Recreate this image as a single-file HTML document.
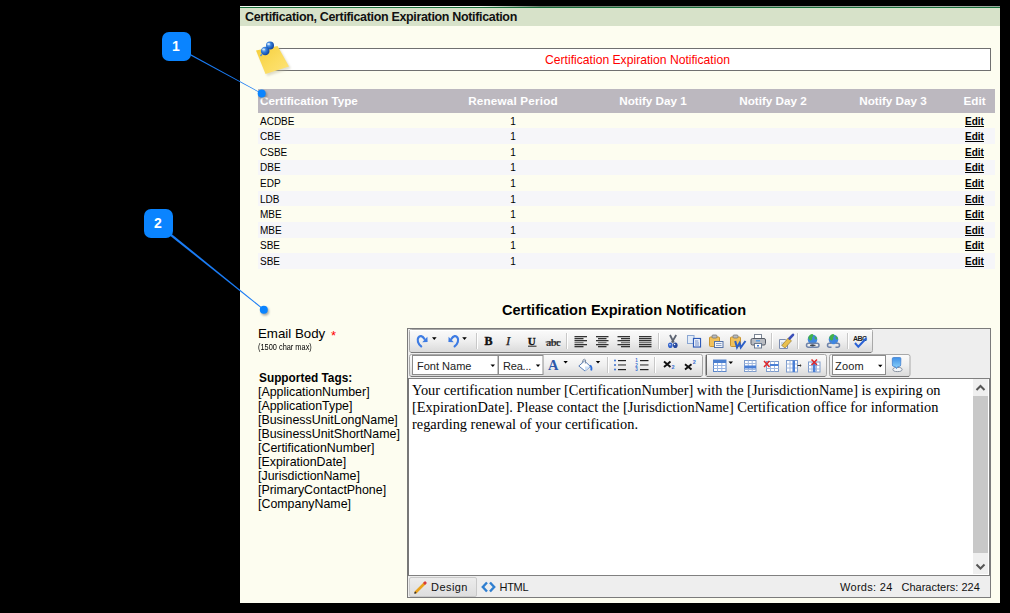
<!DOCTYPE html>
<html><head><meta charset="utf-8">
<style>
html,body{margin:0;padding:0;}
body{width:1010px;height:613px;background:#000;position:relative;overflow:hidden;font-family:"Liberation Sans",sans-serif;}
.a{position:absolute;}
#panel{left:240px;top:6px;width:760px;height:597px;background:#fdfdf0;}
#topline{left:240px;top:6px;width:760px;height:1px;background:linear-gradient(90deg,#f4f8f0 0,#f4f8f0 240px,#6a7a6a 300px,#8a9a8a 500px,#b0b8b0 700px,#9aa49a 760px);}
#greenline{left:240px;top:7px;width:760px;height:1px;background:#17703c;}
#hdr{left:240px;top:8px;width:760px;height:18px;background:#d7e2c9;}
#hdrtxt{left:245px;top:9.5px;font-size:12.5px;font-weight:bold;color:#111;white-space:nowrap;line-height:15px;letter-spacing:-0.34px;}
#tbox{left:272px;top:48px;width:717px;height:21px;border:1px solid #707070;background:#fff;}
#ttxt{left:284px;top:52.5px;width:707px;text-align:center;font-size:12.15px;color:#f00;line-height:15px;}
#thead{left:258px;top:89px;width:737px;height:24px;background:#bcb8bf;}
.th{position:absolute;top:94px;font-size:11.7px;font-weight:bold;color:#fff;white-space:nowrap;line-height:14px;}
.row{position:absolute;left:258px;width:737px;}
.stripe{background:#f6f6f9;}
.td{position:absolute;font-size:10px;color:#000;white-space:nowrap;line-height:12px;}
.edit{position:absolute;font-size:10px;font-weight:bold;color:#000;text-decoration:underline;white-space:nowrap;line-height:12px;}
</style></head><body>
<div class="a" id="panel"></div>
<div class="a" id="topline"></div>
<div class="a" id="greenline"></div>
<div class="a" id="hdr"></div>
<div class="a" id="hdrtxt">Certification, Certification Expiration Notification</div>

<div class="a" id="tbox"></div>
<div class="a" id="ttxt">Certification Expiration Notification</div>

<div class="a" id="thead"></div>
<div class="th" style="left:260px">Certification Type</div>
<div class="th" style="left:413px;width:200px;text-align:center;letter-spacing:0.18px">Renewal Period</div>
<div class="th" style="left:553px;width:200px;text-align:center">Notify Day 1</div>
<div class="th" style="left:673px;width:200px;text-align:center">Notify Day 2</div>
<div class="th" style="left:793px;width:200px;text-align:center">Notify Day 3</div>
<div class="th" style="left:944.5px;width:60px;text-align:center">Edit</div>

<div class="row" style="top:113px;height:15px"></div>
<div class="row stripe" style="top:128px;height:16px"></div>
<div class="row" style="top:144px;height:16px"></div>
<div class="row stripe" style="top:160px;height:15px"></div>
<div class="row" style="top:175px;height:16px"></div>
<div class="row stripe" style="top:191px;height:15px"></div>
<div class="row" style="top:206px;height:16px"></div>
<div class="row stripe" style="top:222px;height:16px"></div>
<div class="row" style="top:238px;height:15px"></div>
<div class="row stripe" style="top:253px;height:16px"></div>
<div class="td" style="left:260px;top:115.5px">ACDBE</div><div class="td" style="left:483px;width:60px;text-align:center;top:115.5px">1</div><div class="edit" style="left:944.5px;width:60px;text-align:center;top:115.5px">Edit</div>
<div class="td" style="left:260px;top:131.1px">CBE</div><div class="td" style="left:483px;width:60px;text-align:center;top:131.1px">1</div><div class="edit" style="left:944.5px;width:60px;text-align:center;top:131.1px">Edit</div>
<div class="td" style="left:260px;top:146.7px">CSBE</div><div class="td" style="left:483px;width:60px;text-align:center;top:146.7px">1</div><div class="edit" style="left:944.5px;width:60px;text-align:center;top:146.7px">Edit</div>
<div class="td" style="left:260px;top:162.3px">DBE</div><div class="td" style="left:483px;width:60px;text-align:center;top:162.3px">1</div><div class="edit" style="left:944.5px;width:60px;text-align:center;top:162.3px">Edit</div>
<div class="td" style="left:260px;top:177.9px">EDP</div><div class="td" style="left:483px;width:60px;text-align:center;top:177.9px">1</div><div class="edit" style="left:944.5px;width:60px;text-align:center;top:177.9px">Edit</div>
<div class="td" style="left:260px;top:193.5px">LDB</div><div class="td" style="left:483px;width:60px;text-align:center;top:193.5px">1</div><div class="edit" style="left:944.5px;width:60px;text-align:center;top:193.5px">Edit</div>
<div class="td" style="left:260px;top:209.1px">MBE</div><div class="td" style="left:483px;width:60px;text-align:center;top:209.1px">1</div><div class="edit" style="left:944.5px;width:60px;text-align:center;top:209.1px">Edit</div>
<div class="td" style="left:260px;top:224.7px">MBE</div><div class="td" style="left:483px;width:60px;text-align:center;top:224.7px">1</div><div class="edit" style="left:944.5px;width:60px;text-align:center;top:224.7px">Edit</div>
<div class="td" style="left:260px;top:240.3px">SBE</div><div class="td" style="left:483px;width:60px;text-align:center;top:240.3px">1</div><div class="edit" style="left:944.5px;width:60px;text-align:center;top:240.3px">Edit</div>
<div class="td" style="left:260px;top:255.9px">SBE</div><div class="td" style="left:483px;width:60px;text-align:center;top:255.9px">1</div><div class="edit" style="left:944.5px;width:60px;text-align:center;top:255.9px">Edit</div>


<!-- note icon -->
<svg class="a" style="left:250px;top:36px" width="44" height="44" viewBox="0 0 44 44">
<defs>
<linearGradient id="ng" x1="0" y1="0" x2="1" y2="1"><stop offset="0" stop-color="#f5cd3a"/><stop offset="0.55" stop-color="#fbdc5e"/><stop offset="1" stop-color="#fde37a"/></linearGradient>
<radialGradient id="pg" cx="0.35" cy="0.35" r="0.7"><stop offset="0" stop-color="#9cc8f5"/><stop offset="0.45" stop-color="#2f78d6"/><stop offset="1" stop-color="#0d3f9a"/></radialGradient>
<filter id="nsh" x="-20%" y="-20%" width="140%" height="140%"><feGaussianBlur stdDeviation="0.8"/></filter>
</defs>
<polygon points="7,15.5 28.5,11 40,31.5 16.5,39" fill="#b8b49a" opacity="0.45" filter="url(#nsh)" transform="translate(0.8,1)"/>
<polygon points="6,14.5 27.5,10 39,30.5 15.5,38" fill="url(#ng)"/>
<circle cx="20" cy="9.6" r="4" fill="url(#pg)"/>
<circle cx="15.2" cy="15" r="4.3" fill="url(#pg)"/>
<ellipse cx="18.6" cy="8" rx="1.4" ry="0.9" fill="#d8ecff" opacity="0.9"/>
<ellipse cx="13.6" cy="13.4" rx="1.4" ry="0.9" fill="#d8ecff" opacity="0.8"/>
<line x1="12" y1="18" x2="10.5" y2="20" stroke="#5b8fd0" stroke-width="1.4"/>
</svg>

<!-- callouts -->
<svg class="a" style="left:0;top:0" width="1010" height="613">
<defs><filter id="dsh" x="-100%" y="-100%" width="300%" height="300%"><feGaussianBlur stdDeviation="1"/></filter></defs>
<polygon points="189.5,53.4 190.5,55.6 261.9,94 261.5,93" fill="#1a7cf5"/>
<polygon points="171.6,234 170.4,235.9 263.5,310.1 264.1,309.3" fill="#1a7cf5"/>
<circle cx="263" cy="95" r="4" fill="#555" opacity="0.5" filter="url(#dsh)"/>
<circle cx="261.7" cy="93.5" r="4" fill="#0a84ff"/>
<circle cx="265" cy="311.5" r="4" fill="#555" opacity="0.5" filter="url(#dsh)"/>
<circle cx="263.8" cy="309.7" r="4" fill="#0a84ff"/>
<rect x="162" y="32" width="29" height="29" rx="7" fill="#0a84ff"/>
<rect x="144" y="209" width="29" height="29" rx="7" fill="#0a84ff"/>
<text x="175.8" y="51" font-family="Liberation Sans" font-weight="bold" font-size="14" fill="#fff" text-anchor="middle">1</text>
<text x="157.8" y="228" font-family="Liberation Sans" font-weight="bold" font-size="14" fill="#fff" text-anchor="middle">2</text>
</svg>

<div class="a" style="left:502px;top:302px;font-size:14.55px;font-weight:bold;color:#000;white-space:nowrap;line-height:17px">Certification Expiration Notification</div>

<div class="a" style="left:258px;top:326px;font-size:13.3px;color:#000;white-space:nowrap;line-height:15px">Email Body <span style="color:#f00;font-size:13px;margin-left:2px;position:relative;top:2px">*</span></div>
<div class="a" style="left:258px;top:341px;font-size:9.6px;color:#000;white-space:nowrap;line-height:11px;transform:scaleX(0.77);transform-origin:0 0">(1500 char max)</div>
<div class="a" style="left:259px;top:371px;font-size:11.85px;font-weight:bold;color:#000;white-space:nowrap;line-height:14px">Supported Tags:</div>
<div class="a" style="left:258px;top:386.3px;font-size:12.4px;color:#000;white-space:nowrap;line-height:13.95px">[ApplicationNumber]<br>[ApplicationType]<br>[BusinessUnitLongName]<br>[BusinessUnitShortName]<br>[CertificationNumber]<br>[ExpirationDate]<br>[JurisdictionName]<br>[PrimaryContactPhone]<br>[CompanyName]</div>

<!-- editor -->
<div class="a" style="left:407px;top:328px;width:582px;height:268px;border:1px solid #7b7b7b;background:#eeeeee"></div>
<div class="a" style="left:407px;top:378px;width:2px;height:198px;background:#777"></div>
<div class="a" style="left:409px;top:378px;width:580px;height:197px;background:#fff;border-top:1px solid #808080;border-bottom:1px solid #808080;border-right:1px solid #808080;box-sizing:border-box;width:581px;height:198px;top:378px"></div>
<div class="a" style="left:412px;top:382px;width:560px;font-family:'Liberation Serif',serif;font-size:14.37px;line-height:16.9px;color:#000">Your certification number [CertificationNumber] with the [JurisdictionName] is expiring on [ExpirationDate]. Please contact the [JurisdictionName] Certification office for information regarding renewal of your certification.</div>
<!-- toolbar -->
<svg class="a" style="left:0;top:0" width="1010" height="613">
<defs>
<linearGradient id="tg" x1="0" y1="0" x2="0" y2="1"><stop offset="0" stop-color="#fbfbfb"/><stop offset="0.5" stop-color="#efefef"/><stop offset="1" stop-color="#d9d9d9"/></linearGradient>
<linearGradient id="blu" x1="0" y1="0" x2="0" y2="1"><stop offset="0" stop-color="#6aa6f0"/><stop offset="1" stop-color="#2a62c8"/></linearGradient>
<linearGradient id="tbl" x1="0" y1="0" x2="0" y2="1"><stop offset="0" stop-color="#5d8fd6"/><stop offset="1" stop-color="#3a6bbf"/></linearGradient>
</defs>
<!-- group backgrounds -->
<rect x="409.5" y="329.5" width="463" height="23" rx="2" fill="url(#tg)" stroke="#a8a8a8"/><line x1="411" y1="352.5" x2="871" y2="352.5" stroke="#7a7a7a"/>
<rect x="409.5" y="354.5" width="293" height="22" rx="2" fill="url(#tg)" stroke="#a8a8a8"/><line x1="411" y1="376.5" x2="701" y2="376.5" stroke="#7a7a7a"/>
<rect x="705.5" y="354.5" width="121" height="22" rx="2" fill="url(#tg)" stroke="#a8a8a8"/><line x1="707" y1="376.5" x2="825" y2="376.5" stroke="#7a7a7a"/>
<rect x="829.5" y="354.5" width="80.5" height="22" rx="2" fill="url(#tg)" stroke="#a8a8a8"/><line x1="831" y1="376.5" x2="909" y2="376.5" stroke="#7a7a7a"/>
<line x1="410" y1="330.5" x2="872" y2="330.5" stroke="#fff" stroke-width="1"/>
<!-- separators -->
<g stroke="#c8c8c8" stroke-width="1">
<line x1="476.5" y1="333" x2="476.5" y2="349"/><line x1="566.5" y1="333" x2="566.5" y2="349"/><line x1="658.5" y1="333" x2="658.5" y2="349"/>
<line x1="771.5" y1="333" x2="771.5" y2="349"/><line x1="797.5" y1="333" x2="797.5" y2="349"/><line x1="847.5" y1="333" x2="847.5" y2="349"/>
<line x1="607.5" y1="357" x2="607.5" y2="373"/><line x1="654.5" y1="357" x2="654.5" y2="373"/>
</g>
<g stroke="#fff" stroke-width="1">
<line x1="477.5" y1="333" x2="477.5" y2="349"/><line x1="567.5" y1="333" x2="567.5" y2="349"/><line x1="659.5" y1="333" x2="659.5" y2="349"/>
<line x1="772.5" y1="333" x2="772.5" y2="349"/><line x1="798.5" y1="333" x2="798.5" y2="349"/><line x1="848.5" y1="333" x2="848.5" y2="349"/>
<line x1="608.5" y1="357" x2="608.5" y2="373"/><line x1="655.5" y1="357" x2="655.5" y2="373"/>
</g>
<line x1="706.5" y1="355" x2="706.5" y2="375" stroke="#666" stroke-width="1"/>

<!-- redo -->
<path d="M421.2,346.4 C418,344 416.8,340 418.3,337.6 C419.8,335.3 422.5,335.5 424.3,338.8" fill="none" stroke="#3d7be3" stroke-width="2.2" stroke-linecap="round"/>
<polygon points="427.4,336.8 427.6,342 422.2,342.2" fill="#3d7be3"/>
<polygon points="432,337.2 436.6,337.2 434.3,340" fill="#000"/>
<!-- undo -->
<path d="M454.6,346.4 C457.8,344 459,340 457.5,337.6 C456,335.3 453.3,335.5 451.5,338.8" fill="none" stroke="#3d7be3" stroke-width="2.2" stroke-linecap="round"/>
<polygon points="448.6,336.8 448.4,342 453.8,342.2" fill="#3d7be3"/>
<polygon points="462.2,337.2 466.8,337.2 464.5,340" fill="#000"/>

<!-- B I U abc -->
<text x="484.6" y="345" font-family="Liberation Serif" font-weight="bold" font-size="12" fill="#111" stroke="#111" stroke-width="0.4">B</text>
<text x="506" y="345.2" font-family="Liberation Serif" font-style="italic" font-size="13" fill="#222" stroke="#222" stroke-width="0.25">I</text>
<text x="527.8" y="344.8" font-family="Liberation Serif" font-weight="bold" font-size="11" fill="#111" stroke="#111" stroke-width="0.3">U</text>
<line x1="528" y1="346.2" x2="536.5" y2="346.2" stroke="#222" stroke-width="1"/>
<text x="546" y="346" font-family="Liberation Serif" font-weight="bold" font-size="10.5" fill="#333" letter-spacing="-0.6">abc</text>
<line x1="545.5" y1="342" x2="561" y2="342" stroke="#333" stroke-width="0.8"/>

<!-- align icons -->
<g fill="#333">
<rect x="574.5" y="336" width="12.5" height="1.3"/><rect x="574.5" y="338" width="9" height="1.3"/><rect x="574.5" y="340" width="12.5" height="1.3"/><rect x="574.5" y="342" width="9" height="1.3" fill="#777"/><rect x="574.5" y="344" width="12.5" height="1.3"/><rect x="574.5" y="346" width="9" height="1.3"/>
<rect x="596" y="336" width="12.5" height="1.3"/><rect x="598" y="338" width="8.5" height="1.3"/><rect x="596" y="340" width="12.5" height="1.3"/><rect x="598" y="342" width="8.5" height="1.3" fill="#777"/><rect x="596" y="344" width="12.5" height="1.3"/><rect x="598" y="346" width="8.5" height="1.3"/>
<rect x="617.5" y="336" width="12.5" height="1.3"/><rect x="621" y="338" width="9" height="1.3"/><rect x="617.5" y="340" width="12.5" height="1.3"/><rect x="621" y="342" width="9" height="1.3" fill="#777"/><rect x="617.5" y="344" width="12.5" height="1.3"/><rect x="621" y="346" width="9" height="1.3"/>
<rect x="639" y="336" width="12.5" height="1.3"/><rect x="639" y="338" width="12.5" height="1.3"/><rect x="639" y="340" width="12.5" height="1.3"/><rect x="639" y="342" width="12.5" height="1.3" fill="#777"/><rect x="639" y="344" width="12.5" height="1.3"/><rect x="639" y="346" width="12.5" height="1.3"/>
</g>

<!-- cut -->
<path d="M670,335 L673.8,342.5 M676.2,335 L671.8,342.5" stroke="#5d6472" stroke-width="1.8" fill="none"/>
<ellipse cx="670.3" cy="345.2" rx="2.3" ry="2.8" fill="#3565cc"/>
<ellipse cx="675.3" cy="345.2" rx="2.3" ry="2.8" fill="#27499e"/>
<circle cx="670" cy="344.8" r="0.7" fill="#fff"/><circle cx="674.6" cy="344.5" r="0.7" fill="#fff"/>
<!-- copy -->
<rect x="687.5" y="335.5" width="6.5" height="8" fill="#e3ecf8" stroke="#8aa6d2" stroke-width="1"/>
<rect x="693.5" y="338.5" width="7" height="8.5" fill="#fff" stroke="#2f5bb8" stroke-width="1.2"/>
<path d="M695,341 h3.5 M695,343 h4 M695,345 h4" stroke="#4f74c0" stroke-width="0.9"/>
<!-- paste -->
<rect x="709.5" y="337" width="10" height="9.5" rx="1" fill="#f1c15b" stroke="#c99531" stroke-width="1"/>
<rect x="712" y="335" width="5" height="3" rx="1" fill="#bbb" stroke="#777" stroke-width="0.8"/>
<rect x="714.5" y="341.5" width="8.5" height="6" fill="#f2f5fa" stroke="#5573a8" stroke-width="1"/>
<path d="M716,343.5 h5.5 M716,345.5 h5.5" stroke="#6d88b8" stroke-width="0.8"/>
<!-- paste word -->
<rect x="730.5" y="337" width="10" height="9.5" rx="1" fill="#f1c15b" stroke="#c99531" stroke-width="1"/>
<rect x="733" y="335" width="5" height="3" rx="1" fill="#bbb" stroke="#777" stroke-width="0.8"/>
<path d="M735.2,341 L737,347.5 L739.6,343 L740.8,347.5 L745.5,341" fill="none" stroke="#2c5fc7" stroke-width="2" stroke-linejoin="miter"/>
<!-- print -->
<rect x="754.5" y="334.5" width="7" height="4.5" fill="#fff" stroke="#7b8594" stroke-width="1"/>
<rect x="751" y="338.5" width="14.5" height="6.5" rx="1.5" fill="#b9bcc2" stroke="#555b66" stroke-width="1"/>
<rect x="756" y="340" width="4" height="1.5" fill="#5fa0e6"/>
<rect x="754.5" y="343.5" width="7" height="4.5" fill="#fff" stroke="#6a7a90" stroke-width="1"/>
<rect x="757" y="345" width="2" height="1.5" fill="#3a78d8"/>

<!-- clean (brush) -->
<path d="M779.5,339.5 h6 l2,2 v7 h-8 z" fill="#eef3fa" stroke="#7c8db0" stroke-width="1"/>
<path d="M781,343 h4 M781,345 h5" stroke="#9aa8c0" stroke-width="0.8"/>
<path d="M781.8,345.5 L788.2,338 L791.5,340.8 L785,348 Z" fill="#e9c04e" stroke="#9b7c2c" stroke-width="0.7"/>
<path d="M789.5,338.5 L793,334.8" stroke="#3b4fb8" stroke-width="2.6" stroke-linecap="round"/>
<!-- link -->
<circle cx="812.5" cy="339.5" r="4.8" fill="#3f86e0"/>
<path d="M808.2,338 q0.8,-3.6 4.3,-3.9 q1.5,1 0.6,2.4 q-1.6,0.6 -0.8,2.3 q-0.3,1.8 -2,1.6 q-1.5,-0.8 -2.1,-2.4z" fill="#43b049"/>
<path d="M814.5,336 q2.2,0.5 2.6,3 q-1.6,1 -2.4,-0.6z" fill="#43b049"/>
<rect x="806.5" y="343.3" width="7" height="4" rx="2" fill="#fff" fill-opacity="0.3" stroke="#6f83a8" stroke-width="1.5"/>
<rect x="812" y="343.3" width="7" height="4" rx="2" fill="#fff" fill-opacity="0.3" stroke="#6f83a8" stroke-width="1.5"/>
<line x1="810" y1="345.3" x2="815.5" y2="345.3" stroke="#333" stroke-width="1"/>
<!-- unlink -->
<circle cx="833.5" cy="339.5" r="4.8" fill="#3f86e0"/>
<path d="M829.2,338 q0.8,-3.6 4.3,-3.9 q1.5,1 0.6,2.4 q-1.6,0.6 -0.8,2.3 q-0.3,1.8 -2,1.6 q-1.5,-0.8 -2.1,-2.4z" fill="#43b049"/>
<path d="M835.5,336 q2.2,0.5 2.6,3 q-1.6,1 -2.4,-0.6z" fill="#43b049"/>
<path d="M831.5,343.3 h-2 a2,2 0 0 0 0,4 h2 M835.5,343.3 h2 a2,2 0 0 1 0,4 h-2" fill="none" stroke="#6f83a8" stroke-width="1.5"/>
<!-- spell -->
<text x="853" y="340.6" font-family="Liberation Sans" font-weight="bold" font-size="7" fill="#222" letter-spacing="-0.6">ABC</text>
<path d="M855,343 L858.3,346.8 L866.5,338" fill="none" stroke="#2a62d6" stroke-width="2"/>

<!-- row 2 -->
<rect x="412.5" y="355.5" width="85.5" height="19" fill="#fff" stroke="#8c8c8c"/>
<rect x="498.5" y="355.5" width="44.5" height="19" fill="#fff" stroke="#8c8c8c"/>
<rect x="832.5" y="355.5" width="53" height="19" fill="#fff" stroke="#8c8c8c"/>
<polygon points="490.5,364.5 495,364.5 492.8,367" fill="#000"/>
<polygon points="535.8,364.5 540.3,364.5 538,367" fill="#000"/>
<polygon points="878,364.8 882.5,364.8 880.3,367.3" fill="#000"/>
<!-- A color -->
<text x="548" y="369.8" font-family="Liberation Serif" font-weight="bold" font-size="14.5" fill="#2d58aa">A</text>
<polygon points="563.5,361 567.8,361 565.6,363.5" fill="#000"/>
<!-- bucket -->
<path d="M578.8,366 L584.5,361 L590.5,366.5 L585,371 Z" fill="#fff" stroke="#5b7fb8" stroke-width="1"/>
<path d="M585,366.5 L590.5,366.5 L585,371 Z" fill="#cfe0f5"/>
<path d="M582.2,362.8 L583.2,359.8 Q584.5,358.6 585.6,360 L585.3,363.5" fill="none" stroke="#7a8aa0" stroke-width="1"/>
<path d="M590,365.5 q2.2,1.6 1.2,5" fill="none" stroke="#2f6fd8" stroke-width="1.8"/>
<polygon points="595.8,361 600.2,361 598,363.5" fill="#000"/>
<!-- bullets -->
<g fill="#3a6fd0"><circle cx="615" cy="360.5" r="1"/><circle cx="615" cy="365" r="1"/><circle cx="615" cy="369.5" r="1"/></g>
<g fill="#222"><rect x="618" y="360" width="8" height="1.2"/><rect x="618" y="364.3" width="8" height="1.3" fill="#555"/><rect x="618" y="369" width="8" height="1.2"/></g>
<!-- numbering -->
<g fill="#3a6fd0" font-family="Liberation Sans" font-size="4.5" font-weight="bold"><text x="635.2" y="362.3">1</text><text x="635.2" y="366.7">2</text><text x="635.2" y="371">3</text></g>
<g fill="#222"><rect x="640" y="360" width="8.5" height="1.2"/><rect x="640" y="364.3" width="8.5" height="1.3" fill="#555"/><rect x="640" y="369" width="8.5" height="1.2"/></g>
<!-- sub / sup -->
<path d="M664,361.5 L670.5,367 M670.5,361.5 L664,367" stroke="#111" stroke-width="1.9"/>
<text x="671.6" y="369.3" font-family="Liberation Sans" font-weight="bold" font-size="5.5" fill="#3a6fd0">2</text>
<path d="M685,364.3 L691.5,369.6 M691.5,364.3 L685,369.6" stroke="#111" stroke-width="1.9"/>
<text x="692.8" y="364.3" font-family="Liberation Sans" font-weight="bold" font-size="5.5" fill="#3a6fd0">2</text>
<!-- table icons -->
<rect x="713.5" y="360" width="12.5" height="11.5" fill="#fff" stroke="#5c86c9"/>
<rect x="713.5" y="360" width="12.5" height="3" fill="#4b7fd0"/>
<path d="M713.5,365.5 h12.5 M713.5,368.5 h12.5 M717.5,363 v8.5 M721.8,363 v8.5" stroke="#9ab6e3" stroke-width="1"/>
<polygon points="728.5,361.5 733,361.5 730.8,364" fill="#000"/>
<!-- insert row -->
<rect x="744.5" y="360.5" width="11.5" height="11" fill="#fff" stroke="#7e9ccc"/>
<path d="M744.5,363.5 h11.5 M744.5,369.5 h11.5 M748.3,360.5 v11 M752.2,360.5 v11" stroke="#a3b9de" stroke-width="1"/>
<rect x="744.5" y="365.5" width="11.5" height="3" fill="#4a7fd6"/>
<!-- delete row -->
<rect x="766.5" y="361.5" width="12" height="10" fill="#fff" stroke="#7e9ccc"/>
<path d="M766.5,365 h12 M766.5,368.5 h12 M770.5,361.5 v10 M774.5,361.5 v10" stroke="#a3b9de" stroke-width="1"/>
<rect x="770" y="364" width="8.5" height="2" fill="#4a7fd6"/>
<path d="M764,361 L769.5,367 M769.5,361 L764,367" stroke="#e0262a" stroke-width="1.5"/>
<!-- insert col -->
<rect x="786.5" y="360.5" width="11" height="11.5" fill="#fff" stroke="#7e9ccc"/>
<path d="M786.5,364 h11 M786.5,368 h11 M790,360.5 v11.5" stroke="#a3b9de" stroke-width="1"/>
<rect x="792.5" y="360.5" width="2.5" height="11.5" fill="#4a7fd6"/>
<path d="M797.5,365.5 h3" stroke="#333" stroke-width="1"/>
<polygon points="800,364 801.5,365.5 800,367" fill="#333"/>
<!-- delete col -->
<rect x="808.5" y="362" width="11.5" height="10" fill="#fff" stroke="#7e9ccc"/>
<path d="M808.5,365.5 h11.5 M808.5,369 h11.5 M812,362 v10 M816.5,362 v10" stroke="#a3b9de" stroke-width="1"/>
<rect x="813" y="362" width="2.5" height="10" fill="#4a7fd6"/>
<path d="M811.5,359.5 L817,365 M817,359.5 L811.5,365" stroke="#e0262a" stroke-width="1.5"/>
<!-- zoom icon -->
<defs><linearGradient id="zg" x1="0" y1="0" x2="0" y2="1"><stop offset="0" stop-color="#3f8fe6"/><stop offset="1" stop-color="#8fd6fb"/></linearGradient></defs>
<ellipse cx="897.5" cy="369.5" rx="4.6" ry="2.1" fill="#f4f6f8" stroke="#7c8797" stroke-width="0.9"/>
<path d="M892.3,358.8 q0,-1.3 1.3,-1.3 h6.2 q1.2,0 1.1,1.3 l-0.2,6.2 q0,1.3 -1.5,1.5 l-1.8,0.4 l-0.9,1.8 l-0.9,-1.8 l-1.8,-0.4 q-1.4,-0.2 -1.4,-1.5 z" fill="url(#zg)" stroke="#3a78cc" stroke-width="0.7"/>
</svg>
<div class="a" style="left:417px;top:359px;font-size:11px;line-height:14px;color:#222;white-space:nowrap">Font Name</div>
<div class="a" style="left:503px;top:359px;font-size:11px;line-height:14px;color:#222;white-space:nowrap;letter-spacing:-0.2px">Rea...</div>
<div class="a" style="left:835px;top:359px;font-size:11px;line-height:14px;color:#222;white-space:nowrap;letter-spacing:0.2px">Zoom</div>
<!-- scrollbar -->
<div class="a" style="left:973px;top:379px;width:15px;height:195px;background:#c8c8c8"></div>
<div class="a" style="left:973px;top:379px;width:15px;height:17px;background:#efefef"></div>
<div class="a" style="left:973px;top:553px;width:15px;height:21px;background:#efefef"></div>
<svg class="a" style="left:973px;top:379px" width="15" height="17"><polyline points="3.5,11 7.5,7 11.5,11" fill="none" stroke="#555" stroke-width="2"/></svg>
<svg class="a" style="left:973px;top:553px" width="15" height="21"><polyline points="3.5,11.5 7.5,15.5 11.5,11.5" fill="none" stroke="#555" stroke-width="2"/></svg>
<!-- status bar -->
<div class="a" style="left:409px;top:577px;width:66px;height:18px;border:1px solid #c9c9c9;border-radius:2px;background:linear-gradient(#ececec,#dedede)"></div>
<svg class="a" style="left:413px;top:580px" width="15" height="15" viewBox="0 0 15 15"><line x1="2" y1="13" x2="12" y2="3" stroke="#e9a21c" stroke-width="2.6"/><line x1="11" y1="4" x2="13" y2="2" stroke="#d83a3a" stroke-width="2.6"/><line x1="1.5" y1="13.5" x2="3" y2="12" stroke="#333" stroke-width="1.5"/></svg>
<div class="a" style="left:431px;top:580px;font-size:11px;line-height:14px;color:#111;white-space:nowrap;letter-spacing:0.45px">Design</div>
<svg class="a" style="left:481px;top:581px" width="15" height="12" viewBox="0 0 15 12"><polyline points="6,1.5 1.8,6 6,10.5" fill="none" stroke="#2f7fd0" stroke-width="2.4"/><polyline points="9,1.5 13.2,6 9,10.5" fill="none" stroke="#2f7fd0" stroke-width="2.4"/></svg>
<div class="a" style="left:499.5px;top:580px;font-size:11px;line-height:14px;color:#111;white-space:nowrap;letter-spacing:-0.3px">HTML</div>
<div class="a" style="left:840px;top:579.5px;font-size:11px;line-height:14px;color:#111;white-space:nowrap;letter-spacing:0.3px">Words: 24</div><div class="a" style="left:901.5px;top:579.5px;font-size:11px;line-height:14px;color:#111;white-space:nowrap;letter-spacing:0px">Characters: 224</div>
</body></html>
